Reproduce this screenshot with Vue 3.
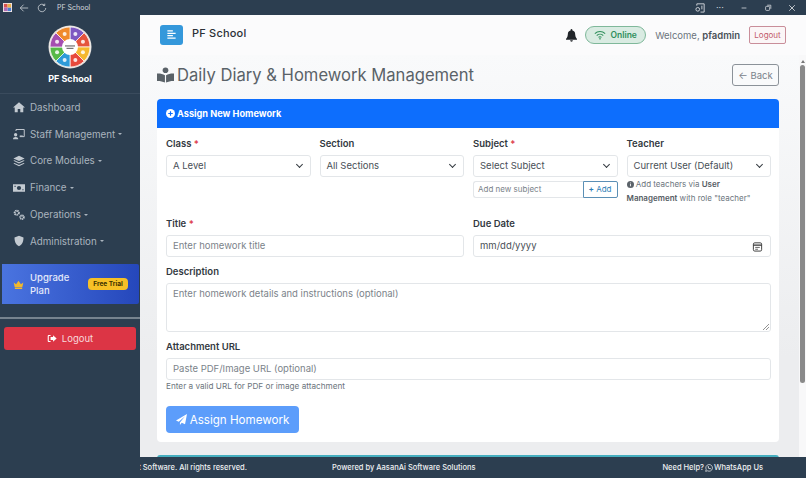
<template>
  <div class="window">
    <div class="titlebar">
      <div class="tb-left">
        <svg class="tb-app" viewBox="0 0 10 10"><rect width="10" height="10" fill="#f3e6e6"/><rect x="1" y="1" width="4" height="4" fill="#d9534f"/><rect x="5" y="5" width="4" height="4" fill="#4a80d0"/><rect x="5" y="1" width="4" height="4" fill="#e8b04a"/><rect x="1" y="5" width="4" height="4" fill="#b06ab3"/></svg>
        <svg class="tb-ico" viewBox="0 0 12 12"><path d="M11 6H1.5M5.5 2 1.5 6l4 4" fill="none" stroke="#c6ccd3" stroke-width="1"/></svg>
        <svg class="tb-ico" viewBox="0 0 12 12"><path d="M10.5 6a4.5 4.5 0 1 1-1.4-3.3M9.3 .8v2.2H7" fill="none" stroke="#c6ccd3" stroke-width="1"/></svg>
        <span class="tb-title">PF School</span>
      </div>
      <div class="tb-right">
        <svg class="tb-cast" viewBox="0 0 12 12"><path d="M2 4V2h8v9H6" fill="none" stroke="#d5d9de" stroke-width="1"/><circle cx="3" cy="8" r="2" fill="none" stroke="#d5d9de"/><path d="M7.5 4v4" stroke="#d5d9de"/></svg>
        <span class="tb-dots">···</span>
        <svg class="tb-btn" viewBox="0 0 10 10"><path d="M2 5h6" stroke="#d5d9de"/></svg>
        <svg class="tb-btn" viewBox="0 0 10 10"><rect x="2" y="3" width="5" height="5" rx="1" fill="none" stroke="#d5d9de"/><path d="M4 1.5h4.5v4.5" fill="none" stroke="#d5d9de"/></svg>
        <svg class="tb-btn" viewBox="0 0 10 10"><path d="M1.5 1.5l7 7M8.5 1.5l-7 7" stroke="#e4e7ea"/></svg>
      </div>
    </div>

    <div class="shell">
      <aside class="sidebar">
        <div class="brand">
          <svg class="logo" viewBox="-22 -22 44 44">
            <circle r="21.5" fill="#e6e2de"/>
            <path v-for="s in wheel" :key="s.color" :d="s.d" :fill="s.color" stroke="#fff" stroke-width=".7"/>
            <circle v-for="s in wheel" :key="s.dot" :cx="s.x" :cy="s.y" r="2" fill="#fff" fill-opacity=".85"/>
            <circle r="8" fill="#fff"/>
            <rect x="-5" y="-1.6" width="10" height="1.1" fill="#666"/>
            <rect x="-3.5" y=".8" width="7" height="1.1" fill="#666"/>
          </svg>
          <div class="brand-name">PF School</div>
        </div>
        <nav class="nav">
          <a v-for="item in navItems" :key="item.label" class="nav-item">
            <svg class="nav-ico" viewBox="0 0 16 16" v-html="item.icon"></svg>
            <span>{{ item.label }}</span>
            <i v-if="item.caret" class="caret"></i>
          </a>
        </nav>
        <div class="upgrade">
          <svg class="crown" viewBox="0 0 16 13"><path fill="#f2b92c" d="M1 3.5l3.500 2.700L8 1l3.500 5.200L15 3.500l-1.500 7h-11zM2.700 11.300h10.600V13H2.700z"/></svg>
          <span class="upgrade-text">Upgrade Plan</span>
          <span class="trial">Free Trial</span>
        </div>
        <div class="side-sep"></div>
        <button class="side-logout">
          <svg viewBox="0 0 14 12"><path fill="#fff" d="M5 1H2.500A1.500 1.500 0 0 0 1 2.500v7A1.500 1.500 0 0 0 2.500 11H5V9.500H2.500v-7H5zM8.500 1.500 13.500 6l-5 4.500V8H5V4h3.500z"/></svg>
          Logout
        </button>
      </aside>

      <div class="right">
        <header class="topbar">
          <div class="top-left">
            <div class="menu-btn">
              <svg viewBox="0 0 12 12"><path d="M1.5 2h6M1.5 4.700h9M1.5 7.300h6M1.5 10h9" stroke="#fff" stroke-width="1.300"/></svg>
            </div>
            <span class="top-name">PF School</span>
          </div>
          <div class="top-right">
            <svg class="bell" viewBox="0 0 12 14"><path fill="#212529" d="M6 0a1 1 0 0 1 1 1v.6A4 4 0 0 1 10 5.500c0 3.500 2 4.500 2 5.500v.5H0V11c0-1 2-2 2-5.500a4 4 0 0 1 3-3.900V1a1 1 0 0 1 1-1zM4.500 12.300h3a1.500 1.500 0 0 1-3 0z"/></svg>
            <span class="online">
              <svg viewBox="0 0 14 11"><path d="M1 4a8.500 8.500 0 0 1 12 0M3.200 6.200a5.400 5.400 0 0 1 7.600 0M5.300 8.200a2.400 2.400 0 0 1 3.400 0" fill="none" stroke="#2f8f5b" stroke-width="1.200"/><circle cx="7" cy="10" r=".9" fill="#2f8f5b"/></svg>
              Online
            </span>
            <span class="welcome">Welcome, <b>pfadmin</b></span>
            <button class="top-logout">Logout</button>
          </div>
        </header>

        <div class="scroller">
          <main class="main">
            <div class="page-head">
              <h1>
                <svg viewBox="0 0 18 16"><circle cx="9" cy="3" r="3" fill="#5a6268"/><path fill="#5a6268" d="M0 6.500C3 6.300 6 6.800 8.400 8.300V16C6 14.700 3 14.200 0 14.300zM18 6.500c-3-.2-6 .3-8.400 1.800V16c2.400-1.300 5.400-1.800 8.400-1.700z"/></svg>
                Daily Diary &amp; Homework Management
              </h1>
              <button class="back"><span class="arrow">←</span> Back</button>
            </div>

            <section class="card">
              <div class="card-head">
                <svg viewBox="0 0 10 10"><circle cx="5" cy="5" r="5" fill="#fff"/><path d="M5 2.500v5M2.500 5h5" stroke="#0d6efd" stroke-width="1.300"/></svg>
                Assign New Homework
              </div>
              <form class="card-body">
                <div class="row-4">
                  <div class="field">
                    <label>Class <em>*</em></label>
                    <div class="select">A Level</div>
                  </div>
                  <div class="field">
                    <label>Section</label>
                    <div class="select">All Sections</div>
                  </div>
                  <div class="field">
                    <label>Subject <em>*</em></label>
                    <div class="select">Select Subject</div>
                    <div class="add-group">
                      <div class="add-input">Add new subject</div>
                      <div class="add-btn"><b>+</b> Add</div>
                    </div>
                  </div>
                  <div class="field">
                    <label>Teacher</label>
                    <div class="select">Current User (Default)</div>
                    <p class="teacher-note">
                      <svg viewBox="0 0 10 10"><circle cx="5" cy="5" r="5" fill="#5c636a"/><path d="M5 4.300v3.200M5 2.200v1.200" stroke="#fff" stroke-width="1.200"/></svg>
                      Add teachers via <b>User</b><br><b>Management</b> with role "teacher"
                    </p>
                  </div>
                </div>

                <div class="row-2">
                  <div class="field">
                    <label>Title <em>*</em></label>
                    <div class="input ph">Enter homework title</div>
                  </div>
                  <div class="field">
                    <label>Due Date</label>
                    <div class="input date">
                      <span>mm/dd/yyyy</span>
                      <svg viewBox="0 0 12 12"><rect x="1.5" y="2" width="9" height="9" rx="1.5" fill="none" stroke="#333" stroke-width="1"/><path d="M1.5 4.500h9" stroke="#333" stroke-width="1.300"/><path d="M3.500 7h5M3.500 9h3" stroke="#333" stroke-width=".8"/></svg>
                    </div>
                  </div>
                </div>

                <div class="field">
                  <label>Description</label>
                  <div class="textarea ph">
                    Enter homework details and instructions (optional)
                    <svg class="grip" viewBox="0 0 7 7"><path d="M7 1 1 7M7 4 4 7" stroke="#777" stroke-width=".8"/></svg>
                  </div>
                </div>

                <div class="field">
                  <label>Attachment URL</label>
                  <div class="input ph">Paste PDF/Image URL (optional)</div>
                  <small>Enter a valid URL for PDF or image attachment</small>
                </div>

                <button type="button" class="submit">
                  <svg viewBox="0 0 14 14"><path fill="#fff" d="M14 0 11.500 13 7.300 11.200 5 14v-3.200L11.500 3 3.500 9.800 0 8.300z"/></svg>
                  Assign Homework
                </button>
              </form>
            </section>

            <div class="next-card"></div>
          </main>
          <div class="scrollbar">
            <i class="sb-up"></i>
            <div class="sb-thumb"></div>
          </div>
        </div>

        <footer class="footer">
          <div class="foot-left"><span>© 2025 School Management Software. All rights reserved.</span></div>
          <div class="foot-mid">Powered by AasanAi Software Solutions</div>
          <div class="foot-right">
            Need Help?
            <svg viewBox="0 0 12 12"><path d="M1 11l.8-2.800A5 5 0 1 1 3.800 10.200z" fill="none" stroke="#fff" stroke-width="1"/><path d="M4 3.800c0 2.400 1.800 4.200 4.200 4.200l.6-1.200-1.500-.8-.6.600c-.6-.3-1.100-.8-1.400-1.400l.6-.6-.8-1.500z" fill="#fff"/></svg>
            WhatsApp Us
          </div>
        </footer>
      </div>
    </div>
  </div>
</template>

<script setup>
// 8 wheel segments, clockwise from the top
const colors = ['#7e57c2', '#e5533d', '#f5b82e', '#e84a3c', '#2e9bd9', '#57b947', '#a54fb0', '#f08a2c']
const wheel = colors.map((color, i) => {
  const a0 = (i * 45 - 90) * Math.PI / 180
  const a1 = ((i + 1) * 45 - 90) * Math.PI / 180
  const mid = (a0 + a1) / 2
  const r = 20
  const p0 = [r * Math.cos(a0), r * Math.sin(a0)]
  const p1 = [r * Math.cos(a1), r * Math.sin(a1)]
  return {
    color,
    dot: 'dot' + i,
    x: 14 * Math.cos(mid),
    y: 14 * Math.sin(mid),
    d: `M0 0L${p0[0]} ${p0[1]}A${r} ${r} 0 0 1 ${p1[0]} ${p1[1]}Z`
  }
})

const navItems = [
  { label: 'Dashboard', caret: false, icon: '<path fill="currentColor" d="M8 1.500 0 8.500h2.300V15h4V10.500h3.400V15h4V8.500H16z"/>' },
  { label: 'Staff Management', caret: true, icon: '<path fill="none" stroke="currentColor" stroke-width="1.300" d="M4 4V2h11v9.500H9"/><circle cx="3.500" cy="9" r="2.200" fill="currentColor"/><path fill="currentColor" d="M0 15c0-2 1.500-3 3.500-3S7 13 7 15zM9 10h4v1.200H9z"/>' },
  { label: 'Core Modules', caret: true, icon: '<path fill="currentColor" d="M8 1 .5 4.500 8 8l7.500-3.500zM2 7 .5 7.800 8 11.300l7.500-3.500L14 7 8 9.800zM2 10.500l-1.500.8L8 15l7.500-3.700-1.500-.8-6 2.800z"/>' },
  { label: 'Finance', caret: true, icon: '<path fill="currentColor" fill-rule="evenodd" d="M0 3h16v10H0zM8 5.200a2.800 2.800 0 1 0 0 5.600 2.800 2.800 0 0 0 0-5.600zM2 5v1.500h1.500V5zm10.500 4.500V11H14V9.500z"/>' },
  { label: 'Operations', caret: true, icon: '<circle cx="5" cy="5" r="2.800" fill="none" stroke="currentColor" stroke-width="2.600" stroke-dasharray="1.800 .7"/><circle cx="12" cy="11" r="2.400" fill="none" stroke="currentColor" stroke-width="2.400" stroke-dasharray="1.500 .6"/>' },
  { label: 'Administration', caret: true, icon: '<path fill="currentColor" d="M8 1 2 3.200C2 8 3.500 12.700 8 15c4.500-2.300 6-7 6-11.800zM8 3v10c2.700-1.700 4-4.800 4.200-8.600z"/>' },
]
</script>

<style>
html, body {
  margin: 0;
  padding: 0;
  overflow: hidden;
}
</style>

<style scoped>
* {
  box-sizing: border-box;
}

.window {
  width: 806px;
  height: 478px;
  display: flex;
  flex-direction: column;
  font-family: "Inter", "Open Sans", sans-serif;
  color: #212529;
  background: #fff;
  overflow: hidden;
}

/* title bar */
.titlebar {
  height: 15px;
  background: #2c3e50;
  display: flex;
  align-items: center;
  justify-content: space-between;
  flex-shrink: 0;
}

.tb-left {
  display: flex;
  align-items: center;
  padding-left: 3px;
}

.tb-app {
  width: 9px;
  height: 9px;
}

.tb-ico {
  width: 10px;
  height: 10px;
  margin-left: 7px;
}

.tb-ico + .tb-ico {
  margin-left: 8px;
}

.tb-title {
  font-size: 7px;
  color: #d5d9de;
  margin-left: 10px;
}

.tb-right {
  display: flex;
  align-items: center;
  padding-right: 10px;
}

.tb-cast {
  width: 11px;
  height: 11px;
}

.tb-dots {
  color: #d5d9de;
  font-size: 9px;
  width: 8px;
  margin-left: 10px;
  line-height: 9px;
}

.tb-btn {
  width: 8px;
  height: 8px;
  margin-left: 16px;
}

.shell {
  flex: 1;
  display: flex;
  min-height: 0;
}

/* sidebar */
.sidebar {
  width: 140px;
  flex-shrink: 0;
  background: #2c3e50;
  display: flex;
  flex-direction: column;
  align-items: stretch;
}

.brand {
  height: 79px;
  padding-top: 10px;
  border-bottom: 1px solid #3a4b5d;
  display: flex;
  flex-direction: column;
  align-items: center;
}

.logo {
  width: 44px;
  height: 44px;
}

.brand-name {
  font-size: 9px;
  font-weight: 700;
  color: #fff;
  margin-top: 4px;
}

.nav {
  display: flex;
  flex-direction: column;
  padding: 0 0 0 13px;
}

.nav-item {
  height: 26.8px;
  display: flex;
  align-items: center;
  font-size: 9.8px;
  color: #aab4be;
}

.nav-ico {
  width: 12px;
  height: 12px;
  color: #c3cad1;
  margin-right: 5px;
  flex-shrink: 0;
}

.caret {
  width: 0;
  height: 0;
  margin-left: 3px;
  border-left: 2.5px solid transparent;
  border-right: 2.5px solid transparent;
  border-top: 2.5px solid #aab4be;
}

.upgrade {
  margin: 9.5px 1px 0 2px;
  height: 40px;
  padding: 0 11px 0 11px;
  border-radius: 0 2px 2px 0;
  background: linear-gradient(90deg, #4a74e0, #2547bb);
  display: flex;
  align-items: center;
}

.crown {
  width: 11px;
  height: 9px;
  flex-shrink: 0;
}

.upgrade-text {
  width: 58px;
  margin-left: 6px;
  font-size: 9.5px;
  font-weight: 500;
  line-height: 13px;
  color: #e4eafa;
}

.trial {
  height: 12px;
  width: 40px;
  flex-shrink: 0;
  border-radius: 4px;
  background: #f6c026;
  color: #3a3000;
  font-size: 6.5px;
  font-weight: 700;
  line-height: 12px;
  text-align: center;
  white-space: nowrap;
}

.side-sep {
  margin-top: 13px;
  height: 1.5px;
  background: #76838f;
}

.side-logout {
  margin: 8.5px 4px 0;
  height: 23px;
  border: 0;
  border-radius: 3px;
  background: #dc3545;
  color: #f8d9dc;
  font-family: inherit;
  font-size: 9.5px;
  display: flex;
  align-items: center;
  justify-content: center;
  gap: 5px;
}

.side-logout svg {
  width: 10px;
  height: 9px;
}

/* right column */
.right {
  flex: 1;
  min-width: 0;
  display: flex;
  flex-direction: column;
}

.topbar {
  height: 40px;
  flex-shrink: 0;
  background: #fbfbfc;
  display: flex;
  align-items: center;
  justify-content: space-between;
  padding: 0 20px;
}

.top-left {
  display: flex;
  align-items: center;
  gap: 9px;
  margin-top: -1px;
}

.menu-btn {
  width: 23px;
  height: 20px;
  border-radius: 3px;
  background: #3498db;
  display: flex;
  align-items: center;
  justify-content: center;
}

.menu-btn svg {
  width: 11px;
  height: 11px;
}

.top-name {
  font-size: 11px;
  font-weight: 500;
  color: #2b3036;
  margin-top: -4px;
  letter-spacing: .2px;
}

.top-right {
  display: flex;
  align-items: center;
}

.bell {
  width: 11px;
  height: 13px;
}

.online {
  margin-left: 8px;
  width: 61px;
  height: 18px;
  border: 1px solid #7fb89a;
  border-radius: 9px;
  background: #d9ebe2;
  color: #2f8f5b;
  font-size: 8.5px;
  font-weight: 600;
  display: flex;
  align-items: center;
  justify-content: center;
  gap: 4px;
}

.online svg {
  width: 12px;
  height: 10px;
}

.welcome {
  margin-left: 9px;
  font-size: 9.5px;
  color: #6c757d;
  white-space: nowrap;
}

.welcome b {
  font-weight: 600;
  color: #495057;
}

.top-logout {
  margin-left: 9px;
  width: 37px;
  height: 18px;
  padding: 0;
  border: 1px solid #c98e9a;
  border-radius: 2px;
  background: #fbf6f7;
  color: #c25a6b;
  font-family: inherit;
  font-size: 8px;
}

/* scrolling content */
.scroller {
  flex: 1;
  min-height: 0;
  display: flex;
  background: #f2f3f5;
  overflow: hidden;
}

.main {
  flex: 1;
  min-width: 0;
  padding: 9px 20px 0 17px;
  background: linear-gradient(#f9fafb, #ecedef 75%);
}

.page-head {
  height: 22px;
  margin-bottom: 13px;
  display: flex;
  align-items: center;
  justify-content: space-between;
}

.page-head h1 {
  margin: 0;
  display: flex;
  align-items: center;
  gap: 3px;
  font-size: 16.6px;
  font-weight: 400;
  color: #5a6268;
  white-space: nowrap;
}

.page-head h1 svg {
  width: 17px;
  height: 16px;
}

.back {
  width: 47px;
  height: 22px;
  padding: 0;
  border: 1px solid #8b9299;
  border-radius: 3px;
  background: #f9fafb;
  color: #7a828a;
  font-family: inherit;
  font-size: 9.5px;
}

.arrow {
  font-size: 10px;
}

.card {
  background: #fff;
  border-radius: 4px;
  overflow: hidden;
}

.card-head {
  height: 29px;
  background: #0d6efd;
  color: #fff;
  font-size: 9.2px;
  font-weight: 700;
  display: flex;
  align-items: center;
  gap: 2px;
  padding-left: 9px;
}

.card-head svg {
  width: 9px;
  height: 9px;
}

.card-body {
  padding: 9px 8px 9px 9px;
  display: flex;
  flex-direction: column;
  gap: 8px;
}

.row-4 {
  display: grid;
  grid-template-columns: repeat(4, 1fr);
  column-gap: 9px;
  height: 72px;
}

.row-2 {
  display: grid;
  grid-template-columns: 1fr 1fr;
  column-gap: 9px;
}

.field {
  display: flex;
  flex-direction: column;
  min-width: 0;
}

label {
  height: 12px;
  margin-bottom: 6px;
  font-size: 9.5px;
  line-height: 14px;
  font-weight: 600;
  color: #33393f;
}

label em {
  font-style: normal;
  color: #dc3545;
}

.select,
.input,
.textarea {
  border: 1px solid #e3e6e9;
  border-radius: 3px;
  background: #fff;
  font-size: 9.5px;
  color: #495057;
}

.select {
  position: relative;
  height: 22px;
  line-height: 20px;
  padding-left: 6px;
  white-space: nowrap;
}

.select::after {
  content: '';
  position: absolute;
  right: 8px;
  top: 6px;
  width: 4px;
  height: 4px;
  border-right: 1px solid #343a40;
  border-bottom: 1px solid #343a40;
  transform: rotate(45deg);
}

.input {
  height: 22px;
  line-height: 20px;
  padding-left: 6px;
}

.ph {
  color: #7b838a;
}

.date {
  display: flex;
  align-items: center;
  justify-content: space-between;
  padding-right: 7px;
}

.date svg {
  width: 11px;
  height: 11px;
}

.textarea {
  position: relative;
  height: 49px;
  padding: 3px 6px;
  line-height: 14px;
}

.grip {
  position: absolute;
  right: 1px;
  bottom: 1px;
  width: 7px;
  height: 7px;
}

.add-group {
  display: flex;
  margin-top: 4px;
  height: 17px;
}

.add-input {
  flex: 1;
  border: 1px solid #e3e6e9;
  border-right: 0;
  border-radius: 3px 0 0 3px;
  font-size: 8px;
  line-height: 15px;
  padding-left: 4px;
  color: #7b838a;
}

.add-btn {
  width: 35px;
  border: 1px solid #5b8fb5;
  border-radius: 0 2px 2px 0;
  font-size: 8px;
  line-height: 15px;
  text-align: center;
  color: #2f7fb8;
}

.teacher-note {
  margin: 0;
  padding-top: 0;
  font-size: 8px;
  line-height: 14px;
  color: #6c757d;
  white-space: nowrap;
}

.teacher-note svg {
  width: 7px;
  height: 7px;
  vertical-align: -0.5px;
}

.teacher-note b {
  font-weight: 600;
  color: #555c63;
}

small {
  margin-top: 1px;
  font-size: 8.2px;
  line-height: 11px;
  color: #6c757d;
}

.submit {
  align-self: flex-start;
  margin-top: 6px;
  width: 133px;
  height: 27px;
  padding: 0;
  border: 0;
  border-radius: 4px;
  background: #5c9dfb;
  color: #fff;
  font-family: inherit;
  font-size: 11.6px;
  display: flex;
  align-items: center;
  justify-content: center;
  gap: 3px;
}

.submit svg {
  width: 11px;
  height: 11px;
}

.next-card {
  margin-top: 13px;
  height: 30px;
  background: #fff;
  border-top: 2px solid #45aebf;
  border-radius: 3px 3px 0 0;
}

.scrollbar {
  width: 7px;
  flex-shrink: 0;
  background: #f8f8f9;
  padding: 5px 0 0 0;
  display: flex;
  flex-direction: column;
  align-items: center;
}

.sb-up {
  width: 0;
  height: 0;
  border-left: 2px solid transparent;
  border-right: 2px solid transparent;
  border-bottom: 3px solid #777;
}

.sb-thumb {
  margin-top: 2px;
  width: 5px;
  height: 318px;
  border-radius: 2.5px;
  background: #8a8a8a;
}

/* footer */
.footer {
  height: 21px;
  flex-shrink: 0;
  background: #2c3e50;
  color: #eef0f2;
  font-size: 7.5px;
  font-weight: 500;
  display: flex;
  align-items: center;
  white-space: nowrap;
}

.foot-left {
  width: 107px;
  overflow: hidden;
  display: flex;
  justify-content: flex-end;
}

.foot-left span {
  flex-shrink: 0;
}

.foot-mid {
  margin-left: 85px;
}

.foot-right {
  margin-left: auto;
  margin-right: 43px;
  display: flex;
  align-items: center;
  gap: 1px;
}

.foot-right svg {
  width: 8px;
  height: 8px;
}
</style>
